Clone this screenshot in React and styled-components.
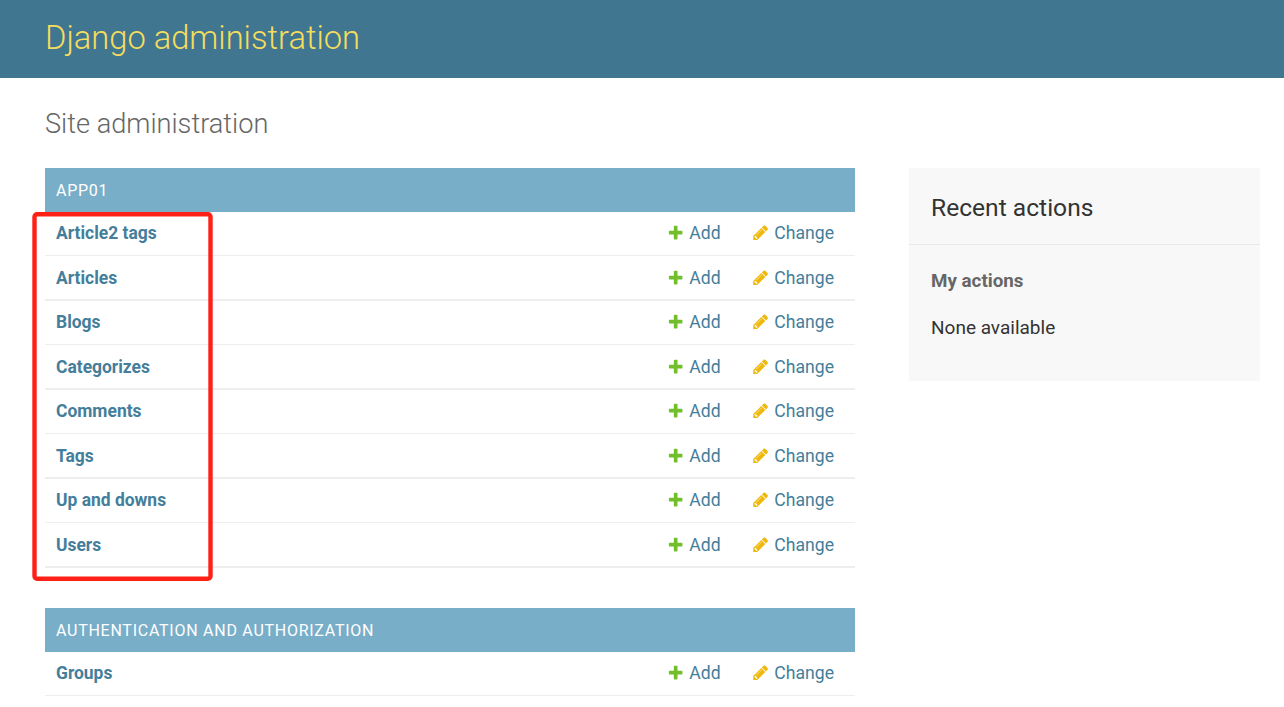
import React from "react";
import styled, { createGlobalStyle } from "styled-components";

const Global = createGlobalStyle`
  html, body { margin: 0; padding: 0; background: #fff; }
  body { font-family: Roboto, "Liberation Sans", sans-serif; font-size: 18px; color: #333; overflow: hidden; }
  * { box-sizing: border-box; }
`;

const Page = styled.div`
  position: relative;
  width: 1284px;
  height: 707px;
  overflow: hidden;
`;

const Header = styled.header`
  height: 78px;
  background: #417690;
  padding: 0 0 2px 45px;
  display: flex;
  align-items: center;
`;

const Brand = styled.h1`
  margin: 0;
  font-size: 32.67px;
  font-weight: 300;
  color: #f5dd5d;
  line-height: 1;
`;

const Content = styled.main`
  padding: 0 24px 0 45px;
`;

const PageTitle = styled.h2`
  margin: 0;
  height: 90px;
  padding-top: 30px;
  font-size: 27.2px;
  line-height: 32px;
  font-weight: 300;
  color: #666;
`;

const Columns = styled.div`
  display: flex;
  gap: 54px;
  align-items: flex-start;
`;

const Main = styled.div`
  width: 810px;
  display: flex;
  flex-direction: column;
  gap: 40px;
`;

const Module = styled.section``;

const Caption = styled.div`
  height: 44px;
  background: #79aec8;
  color: #fff;
  padding-left: 11px;
  display: flex;
  align-items: center;
  font-size: 16px;
  letter-spacing: 0.74px;
  text-transform: uppercase;
`;

const Row = styled.div`
  height: 44px;
  display: grid;
  grid-template-columns: 1fr 85px 103px;
  align-items: center;
  padding: 0 0 1px 11px;
  border-bottom: 1px solid #eee;

  &:nth-child(odd) {
    height: 45px;
    padding-bottom: 0;
    border-bottom-width: 2px;
  }
`;

const Name = styled.a`
  font-size: 17.45px;
  font-weight: 700;
  color: #447e9b;
`;

const Action = styled.a`
  display: flex;
  align-items: center;
  gap: 5px;
  font-size: 17.6px;
  color: #447e9b;
  svg { flex: none; }
`;

const Sidebar = styled.aside`
  width: 351px;
  height: 213px;
  background: #f8f8f8;
`;

const SideHead = styled.h2`
  margin: 0;
  height: 77px;
  padding: 3px 22px 0;
  display: flex;
  align-items: center;
  font-size: 24.6px;
  font-weight: 400;
  color: #333;
  border-bottom: 1px solid #eaeaea;
`;

const SideSub = styled.h3`
  margin: 0;
  padding: 25px 22px 0;
  font-size: 18.8px;
  line-height: 22px;
  font-weight: 700;
  color: #666;
`;

const SideText = styled.p`
  margin: 0;
  padding: 25px 22px 0;
  font-size: 19px;
  line-height: 22px;
  color: #333;
`;

const Annotation = styled.svg`
  position: absolute;
  left: 30px;
  top: 210px;
  pointer-events: none;
`;

const AddIcon = () => (
  <svg width="17.33" height="17.33" viewBox="0 0 1792 1792">
    <path fill="#70bf2b" d="M1600 796v192q0 40-28 68t-68 28h-416v416q0 40-28 68t-68 28h-192q-40 0-68-28t-28-68v-416h-416q-40 0-68-28t-28-68v-192q0-40 28-68t68-28h416v-416q0-40 28-68t68-28h192q40 0 68 28t28 68v416h416q40 0 68 28t28 68z" />
  </svg>
);

const ChangeIcon = () => (
  <svg width="17.33" height="17.33" viewBox="0 0 1792 1792">
    <path fill="#efb80b" d="M491 1536l91-91-235-235-91 91v107h128v128h107zm523-928q0-22-22-22-10 0-17 7l-542 542q-7 7-7 17 0 22 22 22 10 0 17-7l542-542q7-7 7-17zm-54-192l416 416-832 832h-416v-416zm683 96q0 53-37 90l-166 166-416-416 166-165q36-38 90-38 53 0 91 38l235 234q37 39 37 91z" />
  </svg>
);

const modules = [
  { title: "App01", rows: ["Article2 tags", "Articles", "Blogs", "Categorizes", "Comments", "Tags", "Up and downs", "Users"] },
  { title: "Authentication and Authorization", rows: ["Groups"] },
];

export default function App() {
  return (
    <Page>
      <Global />
      <Header>
        <Brand>Django administration</Brand>
      </Header>
      <Content>
        <PageTitle>Site administration</PageTitle>
        <Columns>
          <Main>
            {modules.map((m) => (
              <Module key={m.title}>
                <Caption>{m.title}</Caption>
                {m.rows.map((r) => (
                  <Row key={r}>
                    <Name>{r}</Name>
                    <Action><AddIcon />Add</Action>
                    <Action><ChangeIcon />Change</Action>
                  </Row>
                ))}
              </Module>
            ))}
          </Main>
          <Sidebar>
            <SideHead>Recent actions</SideHead>
            <SideSub>My actions</SideSub>
            <SideText>None available</SideText>
          </Sidebar>
        </Columns>
      </Content>
      <Annotation width="186" height="374" viewBox="0 0 186 374">
        <rect x="4.5" y="4.3" width="176" height="364.4" rx="2.5" fill="none" stroke="#ff2116" strokeWidth="4.4" />
      </Annotation>
    </Page>
  );
}
